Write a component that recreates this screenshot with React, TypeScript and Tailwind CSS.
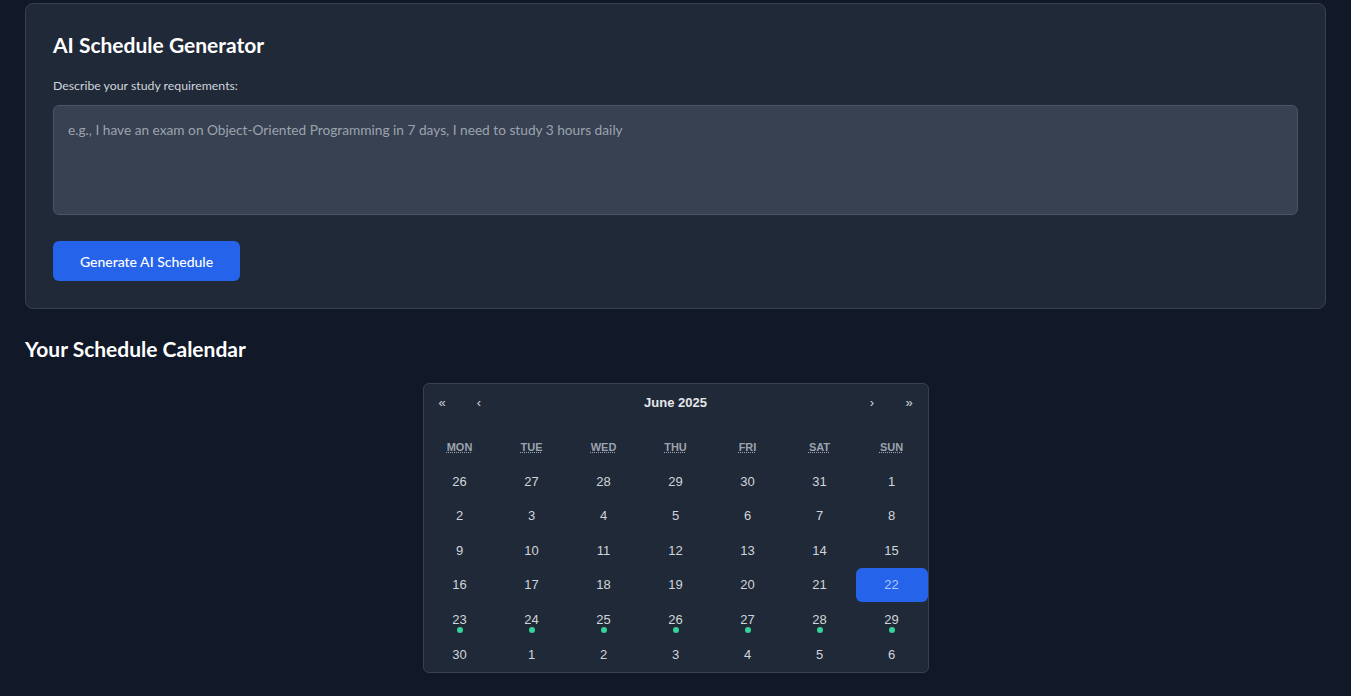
import React from "react";

const days: { n: number; dot?: boolean; today?: boolean }[] = [
  26, 27, 28, 29, 30, 31, 1, 2, 3, 4, 5, 6, 7, 8, 9, 10, 11, 12, 13, 14, 15, 16,
  17, 18, 19, 20, 21, 22, 23, 24, 25, 26, 27, 28, 29, 30, 1, 2, 3, 4, 5, 6,
].map((n, i) => ({
  n,
  today: i === 27,
  dot: i >= 28 && i <= 34,
}));

const weekdays = [
  ["MON", "Monday"],
  ["TUE", "Tuesday"],
  ["WED", "Wednesday"],
  ["THU", "Thursday"],
  ["FRI", "Friday"],
  ["SAT", "Saturday"],
  ["SUN", "Sunday"],
];

const Calendar: React.FC = () => (
  <div className="w-[506px] bg-[#1f2937] border border-[#374151] rounded-md font-['Liberation_Sans',Arial,sans-serif]">
    <div className="flex h-[38px] items-center text-[13px] text-[#d1d5db]">
      <button className="w-[37px] h-full">«</button>
      <button className="w-[37px] h-full">‹</button>
      <span className="flex-1 text-center font-bold text-[13px] text-[#e5e7eb]">
        June 2025
      </span>
      <button className="w-[37px] h-full">›</button>
      <button className="w-[37px] h-full">»</button>
    </div>
    <div className="grid grid-cols-7 mt-[9px] h-[33px] items-center">
      {weekdays.map(([s, l]) => (
        <div key={s} className="text-center text-[11px] font-bold text-[#9ca3af]">
          <abbr title={l} className="underline decoration-dotted">
            {s}
          </abbr>
        </div>
      ))}
    </div>
    <div className="grid grid-cols-7 auto-rows-[34.6px]">
      {days.map((d, i) => (
        <div
          key={i}
          className={`relative flex items-center justify-center text-[13px] rounded-md ${
            d.today ? "bg-[#2563eb] text-[#a5c8fd]" : "text-[#d1d5db]"
          }`}
        >
          <span>{d.n}</span>
          {d.dot && (
            <span className="absolute left-1/2 -translate-x-1/2 bottom-[4px] w-[6px] h-[6px] rounded-full bg-[#34d399]" />
          )}
        </div>
      ))}
    </div>
  </div>
);

export default function App() {
  return (
    <div className="min-h-screen bg-[#111827] px-[25px] pt-[3px] pb-6 font-['Lato',sans-serif] text-white">
      <div className="bg-[#1f2937] border border-[#374151] rounded-lg p-[27px]">
        <h2 className="text-[21px] font-bold leading-7 text-white">AI Schedule Generator</h2>
        <label className="block mt-[19px] mb-[11px] text-[12.3px] leading-4 text-[#d1d5db]">
          Describe your study requirements:
        </label>
        <textarea
          className="block w-full h-[110px] resize-none bg-[#374151] border border-[#4b5563] rounded-md px-[14px] py-[14px] text-[13.7px] text-white placeholder:text-[#9ca3af] outline-none"
          placeholder="e.g., I have an exam on Object-Oriented Programming in 7 days, I need to study 3 hours daily"
        />
        <button className="mt-[26px] h-[40px] w-[187px] bg-[#2563eb] rounded-md text-[14px] font-medium text-white">
          Generate AI Schedule
        </button>
      </div>
      <h2 className="mt-[26px] text-[21px] font-bold leading-7 text-white">
        Your Schedule Calendar
      </h2>
      <div className="flex justify-center mt-[20px]">
        <Calendar />
      </div>
    </div>
  );
}
